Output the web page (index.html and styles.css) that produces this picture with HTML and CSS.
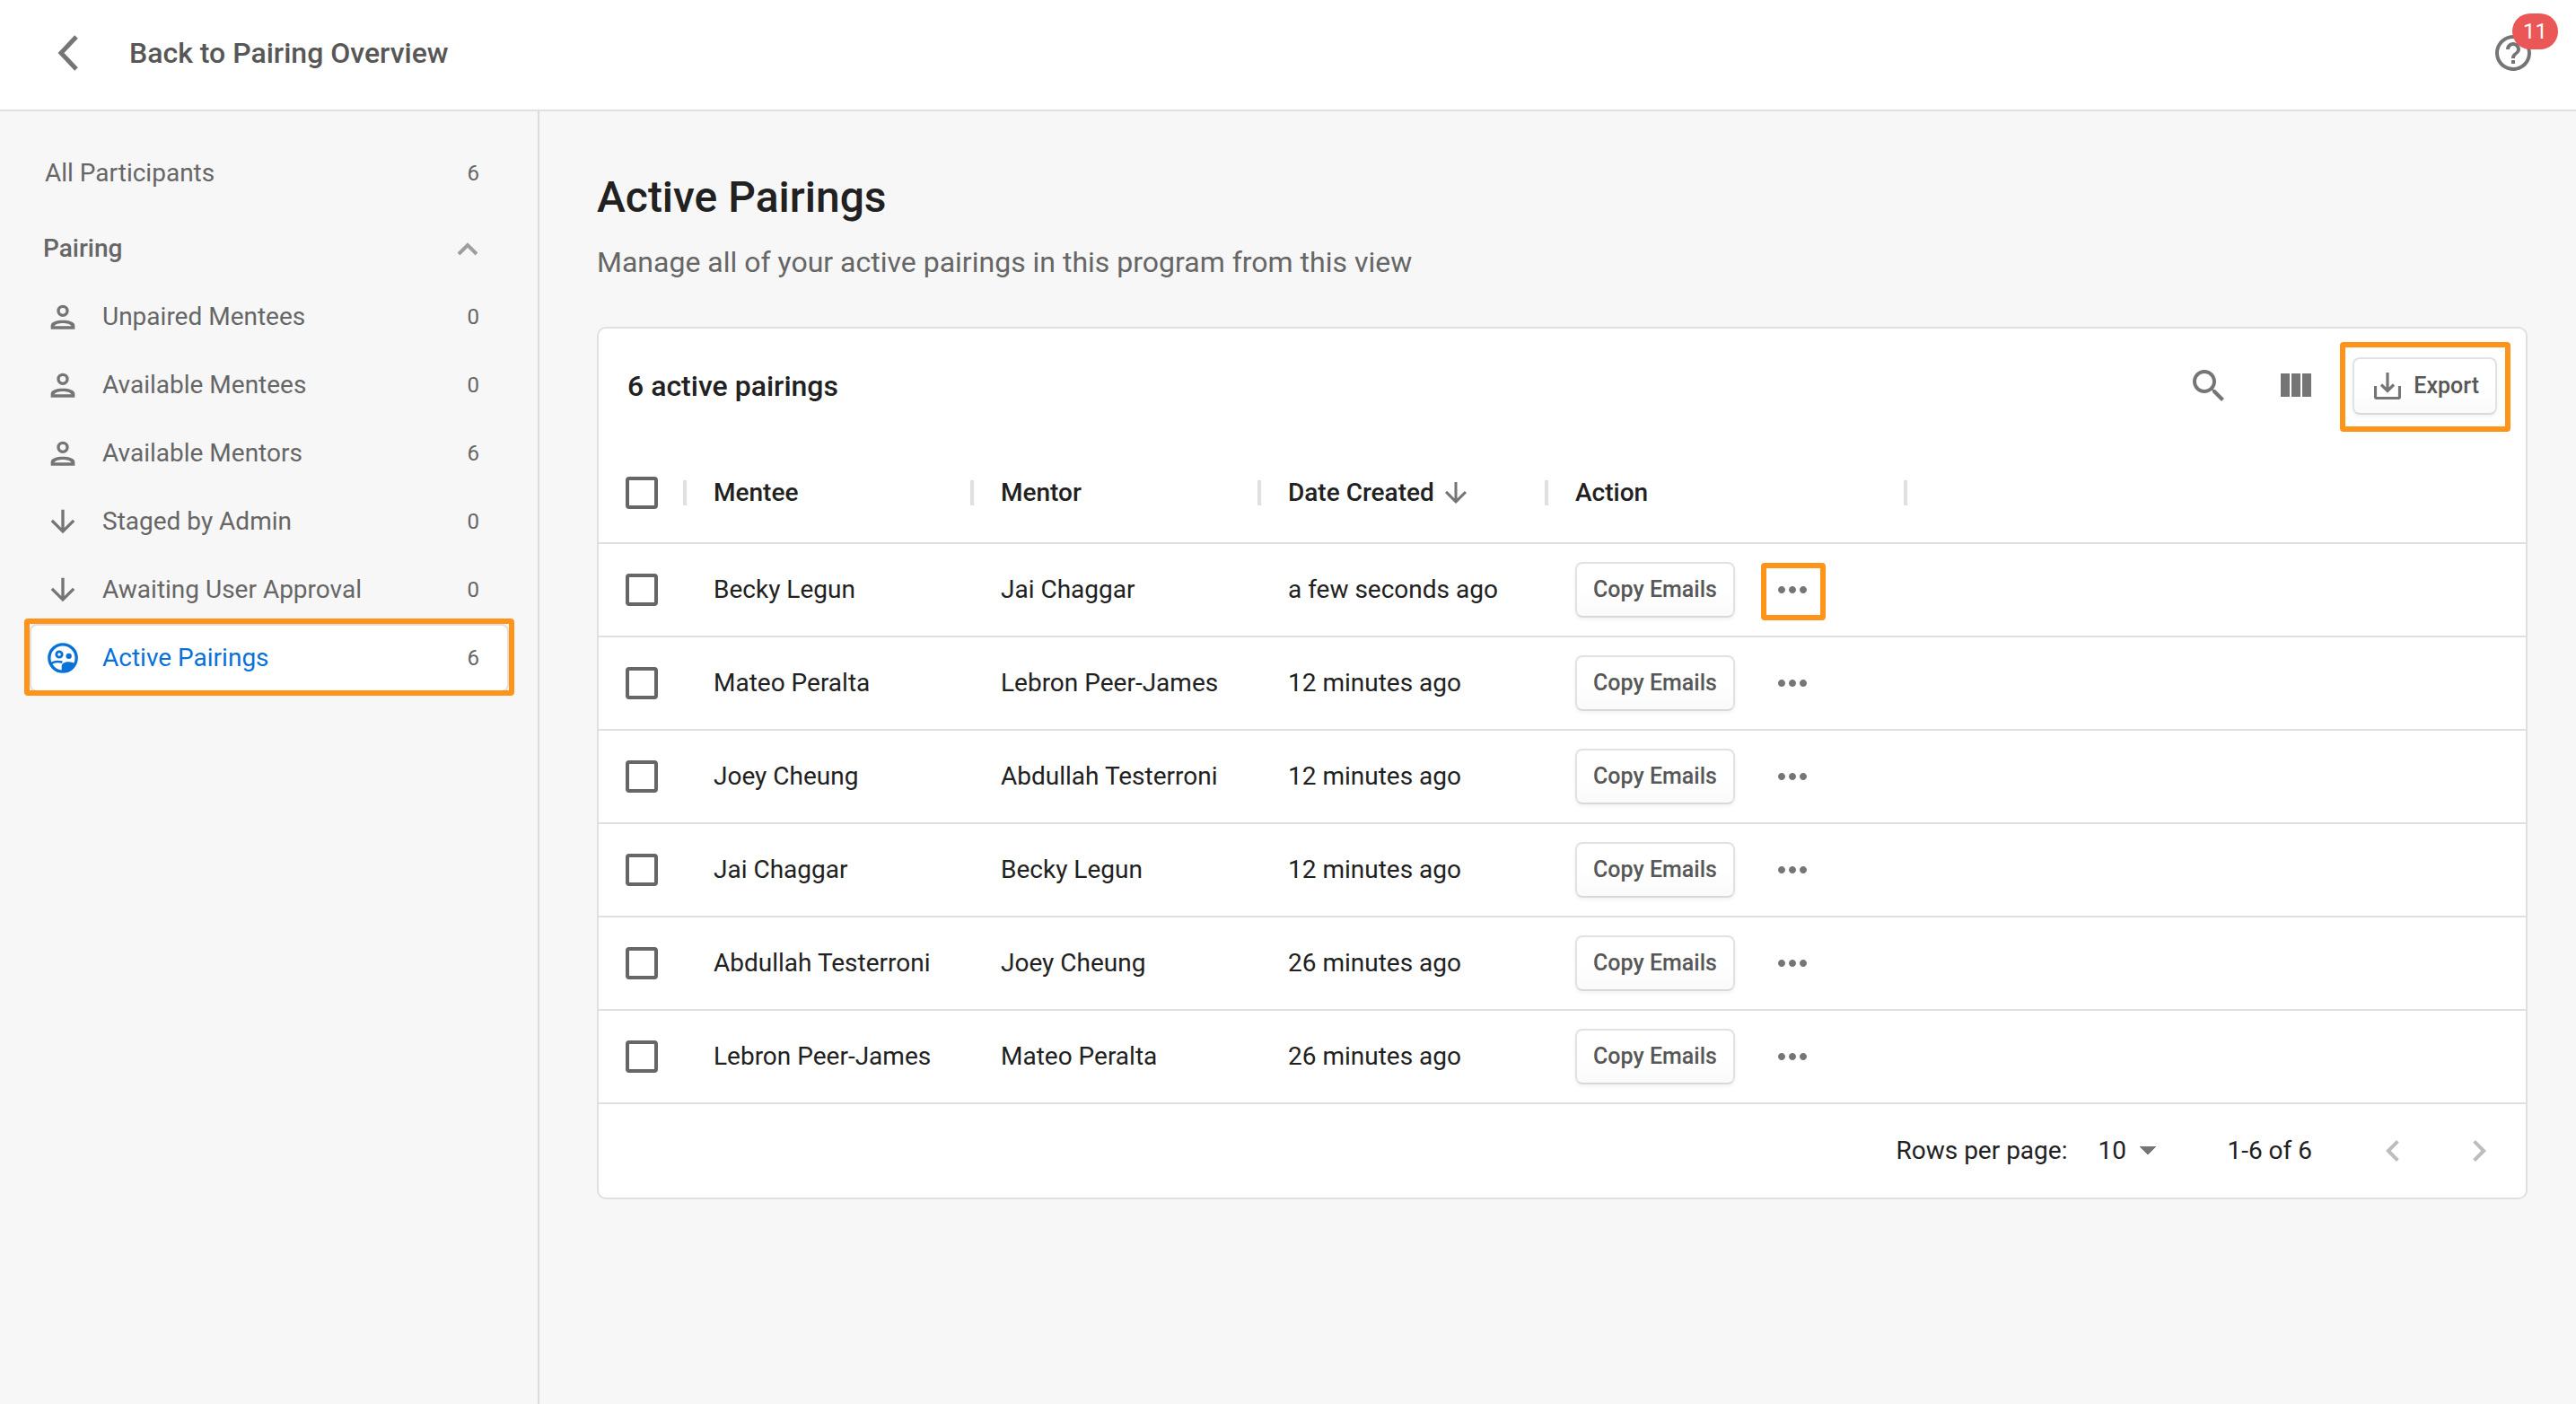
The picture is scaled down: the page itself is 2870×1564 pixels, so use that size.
FILE: index.html
```html
<!DOCTYPE html>
<html lang="en">
<head>
<meta charset="utf-8">
<title>Active Pairings</title>
<link rel="stylesheet" href="styles.css">
</head>
<body>
<svg class="sprite" aria-hidden="true">
  <symbol id="i-person" viewBox="0 0 24 24"><circle cx="12" cy="8" r="3" fill="none" stroke="currentColor" stroke-width="2"/><path fill-rule="evenodd" d="M4 20.200V17.800C4 15.200 8 14.200 12 14.200s8 1 8 3.600v2.400zM6.200 18.200h11.600c-.8-1.300-3.200-2-5.800-2s-5 .7-5.800 2z"/></symbol>
  <symbol id="i-down" viewBox="0 0 24 24"><path d="M20 12l-1.410-1.410L13 16.170V4h-2v12.170l-5.580-5.590L4 12l8 8 8-8z"/></symbol>
  <symbol id="i-dots" viewBox="0 0 24 24"><path d="M6 10c-1.100 0-2 .9-2 2s.9 2 2 2 2-.9 2-2-.9-2-2-2zm12 0c-1.100 0-2 .9-2 2s.9 2 2 2 2-.9 2-2-.9-2-2-2zm-6 0c-1.100 0-2 .9-2 2s.9 2 2 2 2-.9 2-2-.9-2-2-2z"/></symbol>
</svg>

<header class="topbar">
  <a class="back" href="#">
    <svg class="icon-back" viewBox="0 0 24 40"><path d="M21 2L4 20l17 18" fill="none" stroke="currentColor" stroke-width="5"/></svg>
    <span>Back to Pairing Overview</span>
  </a>
  <button class="help" type="button" aria-label="Help">
    <svg class="icon-48" viewBox="0 0 24 24"><path d="M11 18h2v-2h-2v2zm1-16C6.480 2 2 6.480 2 12s4.480 10 10 10 10-4.480 10-10S17.520 2 12 2zm0 18c-4.410 0-8-3.590-8-8s3.590-8 8-8 8 3.590 8 8-3.590 8-8 8zm0-14c-2.210 0-4 1.790-4 4h2c0-1.100.9-2 2-2s2 .9 2 2c0 2-3 1.750-3 5h2c0-2.250 3-2.500 3-5 0-2.210-1.790-4-4-4z"/></svg>
    <span class="badge">11</span>
  </button>
</header>

<div class="layout">
  <nav class="sidebar">
    <a class="item" href="#"><span class="label">All Participants</span><span class="count">6</span></a>
    <button class="group" type="button"><span>Pairing</span>
      <svg class="icon-chevron" viewBox="0 0 24 16"><path d="M2 14L12 4l10 10" fill="none" stroke="currentColor" stroke-width="4"/></svg>
    </button>
    <a class="item" href="#"><svg class="icon-40"><use href="#i-person"/></svg><span class="label">Unpaired Mentees</span><span class="count">0</span></a>
    <a class="item" href="#"><svg class="icon-40"><use href="#i-person"/></svg><span class="label">Available Mentees</span><span class="count">0</span></a>
    <a class="item" href="#"><svg class="icon-40"><use href="#i-person"/></svg><span class="label">Available Mentors</span><span class="count">6</span></a>
    <a class="item" href="#"><svg class="icon-40"><use href="#i-down"/></svg><span class="label">Staged by Admin</span><span class="count">0</span></a>
    <a class="item" href="#"><svg class="icon-40"><use href="#i-down"/></svg><span class="label">Awaiting User Approval</span><span class="count">0</span></a>
    <a class="item active marked" href="#"><svg class="icon-40" viewBox="0 0 24 24"><circle cx="12" cy="12" r="9.100" fill="none" stroke="currentColor" stroke-width="2"/><circle cx="9.600" cy="9.600" r="1.900" fill="none" stroke="currentColor" stroke-width="1.700"/><circle cx="16" cy="10.700" r="1.900"/><path d="M3.800 16c1.800-1.500 5-1.900 7.800-1.200" fill="none" stroke="currentColor" stroke-width="1.600"/><path d="M11.200 21v-3.600c0-2 2.200-2.900 4.600-2.900 1.700 0 3.200.5 4.400 1.300C18.700 19 15.500 21.300 11.200 21z"/></svg><span class="label">Active Pairings</span><span class="count">6</span></a>
  </nav>

  <main class="main">
    <h1>Active Pairings</h1>
    <p class="lead">Manage all of your active pairings in this program from this view</p>

    <section class="card">
      <div class="toolbar">
        <h2>6 active pairings</h2>
        <div class="tools">
          <button type="button" aria-label="Search"><svg class="icon-48" viewBox="0 0 24 24"><path d="M15.500 14h-.79l-.28-.27C15.410 12.590 16 11.110 16 9.500 16 5.910 13.090 3 9.500 3S3 5.910 3 9.500 5.910 16 9.500 16c1.610 0 3.090-.59 4.230-1.570l.27.28v.79l5 4.990L20.490 19l-4.990-5zm-6 0C7.010 14 5 11.990 5 9.500S7.010 5 9.500 5 14 7.010 14 9.500 11.990 14 9.500 14z"/></svg></button>
          <button type="button" aria-label="View columns"><svg class="icon-48" viewBox="0 0 24 24"><path d="M10 18h5V5h-5v13zm-6 0h5V5H4v13zM16 5v13h5V5h-5z"/></svg></button>
        </div>
        <button class="btn export marked" type="button"><svg class="icon-30" viewBox="0 0 30 30"><path d="M1.500 15v12q0 1.500 1.500 1.500h24q1.500 0 1.500-1.500V15M15 0v20M8 13.500l7 7 7-7" fill="none" stroke="currentColor" stroke-width="3.200"/></svg>Export</button>
      </div>

      <table class="grid">
        <colgroup><col class="c-check"><col class="c-text"><col class="c-text"><col class="c-text"><col class="c-action"><col></colgroup>
        <thead>
          <tr><th><input type="checkbox" aria-label="Select all"></th><th>Mentee</th><th>Mentor</th><th><span class="sort">Date Created <svg class="icon-36"><use href="#i-down"/></svg></span></th><th>Action</th><td></td></tr>
        </thead>
        <tbody>
          <tr><td><input type="checkbox" aria-label="Select Becky Legun"></td><td>Becky Legun</td><td>Jai Chaggar</td><td>a few seconds ago</td><td><div class="actions"><button class="btn" type="button">Copy Emails</button><button class="more marked" type="button" aria-label="More"><svg class="icon-48"><use href="#i-dots"/></svg></button></div></td><td></td></tr>
          <tr><td><input type="checkbox" aria-label="Select Mateo Peralta"></td><td>Mateo Peralta</td><td>Lebron Peer-James</td><td>12 minutes ago</td><td><div class="actions"><button class="btn" type="button">Copy Emails</button><button class="more" type="button" aria-label="More"><svg class="icon-48"><use href="#i-dots"/></svg></button></div></td><td></td></tr>
          <tr><td><input type="checkbox" aria-label="Select Joey Cheung"></td><td>Joey Cheung</td><td>Abdullah Testerroni</td><td>12 minutes ago</td><td><div class="actions"><button class="btn" type="button">Copy Emails</button><button class="more" type="button" aria-label="More"><svg class="icon-48"><use href="#i-dots"/></svg></button></div></td><td></td></tr>
          <tr><td><input type="checkbox" aria-label="Select Jai Chaggar"></td><td>Jai Chaggar</td><td>Becky Legun</td><td>12 minutes ago</td><td><div class="actions"><button class="btn" type="button">Copy Emails</button><button class="more" type="button" aria-label="More"><svg class="icon-48"><use href="#i-dots"/></svg></button></div></td><td></td></tr>
          <tr><td><input type="checkbox" aria-label="Select Abdullah Testerroni"></td><td>Abdullah Testerroni</td><td>Joey Cheung</td><td>26 minutes ago</td><td><div class="actions"><button class="btn" type="button">Copy Emails</button><button class="more" type="button" aria-label="More"><svg class="icon-48"><use href="#i-dots"/></svg></button></div></td><td></td></tr>
          <tr><td><input type="checkbox" aria-label="Select Lebron Peer-James"></td><td>Lebron Peer-James</td><td>Mateo Peralta</td><td>26 minutes ago</td><td><div class="actions"><button class="btn" type="button">Copy Emails</button><button class="more" type="button" aria-label="More"><svg class="icon-48"><use href="#i-dots"/></svg></button></div></td><td></td></tr>
        </tbody>
      </table>

      <footer class="pager">
        <label for="rows">Rows per page:</label>
        <select id="rows"><option>10</option><option>25</option><option>50</option></select>
        <span class="range">1-6 of 6</span>
        <button class="page" type="button" disabled aria-label="Previous page"><svg class="icon-48" viewBox="0 0 24 24"><path d="M15.410 7.410L14 6l-6 6 6 6 1.410-1.410L10.830 12z"/></svg></button>
        <button class="page" type="button" disabled aria-label="Next page"><svg class="icon-48" viewBox="0 0 24 24"><path d="M10 6L8.590 7.410 13.170 12l-4.580 4.590L10 18l6-6z"/></svg></button>
      </footer>
    </section>
  </main>
</div>
</body>
</html>
```
FILE: styles.css
```css
:root {
  --line: #e0e0e0;
  --ink: #212121;
  --muted: #666;
  --icon: #757575;
  --blue: #0972d9;
  --mark: #ff941a;
}

* { box-sizing: border-box; }

body {
  margin: 0;
  min-height: 100vh;
  display: flex;
  flex-direction: column;
  background: #f7f7f7;
  color: var(--ink);
  font-family: Roboto, "Liberation Sans", sans-serif;
  font-size: 28px;
  line-height: 40px;
}

button, input, select { font: inherit; color: inherit; margin: 0; }
button { padding: 0; border: 0; background: none; }
a { color: inherit; text-decoration: none; }
svg { display: block; flex: none; fill: currentColor; }
.sprite { position: absolute; width: 0; height: 0; }

.icon-30 { width: 30px; height: 30px; }
.icon-36 { width: 36px; height: 36px; }
.icon-40 { width: 40px; height: 40px; }
.icon-48 { width: 48px; height: 48px; }
.icon-back { width: 24px; height: 40px; }
.icon-chevron { width: 24px; height: 16px; }

/* Header */
.topbar {
  display: flex;
  align-items: center;
  justify-content: space-between;
  height: 124px;
  padding: 0 46px 4px 64px;
  background: #fff;
  border-bottom: 2px solid var(--line);
}
.back {
  display: flex;
  align-items: center;
  gap: 56px;
  color: #575757;
  font-size: 32px;
  font-weight: 500;
}
.back svg, .help { color: var(--icon); }
.help { position: relative; }
.badge {
  position: absolute;
  left: 23px;
  top: -20px;
  width: 51px;
  border-radius: 20px;
  background: #eb5757;
  color: #fff;
  font-size: 24px;
  text-align: center;
}

/* Sidebar */
.layout { flex: 1; display: flex; }
.sidebar {
  flex: none;
  display: flex;
  flex-direction: column;
  width: 601px;
  padding: 31px 32px 32px 33px;
  border-right: 2px solid #dcdcdc;
  color: var(--muted);
}
.item {
  display: flex;
  align-items: center;
  gap: 24px;
  height: 76px;
  padding: 0 31px 0 15px;
  border: 2px solid transparent;
  border-radius: 8px;
}
.item svg { color: var(--icon); }
.label { flex: 1; }
.count { font-size: 24px; }
.group {
  display: flex;
  align-items: center;
  justify-content: space-between;
  height: 76px;
  margin-top: 8px;
  padding: 0 34px 0 15px;
  font-weight: 500;
}
.group svg { color: #9e9e9e; }
.active { background: #fff; border-color: var(--line); }
.active svg, .active .label { color: var(--blue); }

/* Highlight frame round a control */
.marked { position: relative; }
.marked::after {
  content: "";
  position: absolute;
  inset: -8px -8px -6px;
  border: 6px solid var(--mark);
  border-radius: 4px;
}

/* Main */
.main { flex: 1; padding: 64px 54px 64px 64px; }
h1, h2, p { margin: 0; }
h1 { font-size: 48px; font-weight: 500; line-height: 64px; }
.lead { margin: 20px 0 52px; color: var(--muted); font-size: 32px; line-height: 40px; }
.card { background: #fff; border: 2px solid var(--line); border-radius: 10px; }

.toolbar { display: flex; align-items: center; gap: 40px; height: 128px; padding: 0 32px; }
.toolbar h2 { flex: 1; font-size: 32px; font-weight: 500; }
.tools { display: flex; gap: 48px; color: var(--icon); }

.btn {
  display: flex;
  align-items: center;
  justify-content: center;
  height: 62px;
  padding: 0 18px;
  border: 2px solid #dfe3e6;
  border-bottom-color: #d5dade;
  border-radius: 8px;
  background: linear-gradient(#fff 50%, #fafafa);
  box-shadow: 0 2px 4px rgba(0, 0, 0, 0.06);
  color: #575757;
  font-size: 25px;
  font-weight: 500;
}
.export { gap: 14px; height: 64px; padding-left: 22px; }
.export svg { color: var(--icon); }
.export.marked::after { inset: -19px -17px -21px -16px; }

/* Table */
.grid { width: 100%; table-layout: fixed; border-collapse: separate; border-spacing: 0; }
.c-check { width: 98px; }
.c-text { width: 320px; }
.c-action { width: 400px; }
.grid th, .grid td {
  height: 104px;
  padding: 0 0 0 30px;
  border-bottom: 2px solid var(--line);
  text-align: left;
  font-weight: 400;
}
.grid thead th, .grid thead td { height: 112px; }
.grid th {
  font-weight: 500;
  background: linear-gradient(var(--line), var(--line)) no-repeat right center / 4px 28px;
}
.sort { display: flex; align-items: center; gap: 6px; }
.sort svg { color: var(--icon); }
input[type="checkbox"] {
  appearance: none;
  display: block;
  width: 36px;
  height: 36px;
  border: 4px solid var(--muted);
  border-radius: 4px;
}
.actions { display: flex; align-items: center; gap: 40px; }
.more { color: var(--icon); }
.more.marked::after { inset: -6px -13px -10px -11px; }

/* Pagination */
.pager {
  display: flex;
  align-items: center;
  justify-content: flex-end;
  height: 104px;
  padding: 0 28px;
}
#rows {
  appearance: none;
  margin: 0 78px 0 34px;
  padding: 0 34px 0 0;
  border: 0;
  background: conic-gradient(from -45deg at 50% 100%, var(--icon) 90deg, transparent 0) no-repeat right center / 20px 10px;
}
.range { margin-right: 66px; }
.page { color: #bdbdbd; }
.page + .page { margin-left: 48px; }
```
